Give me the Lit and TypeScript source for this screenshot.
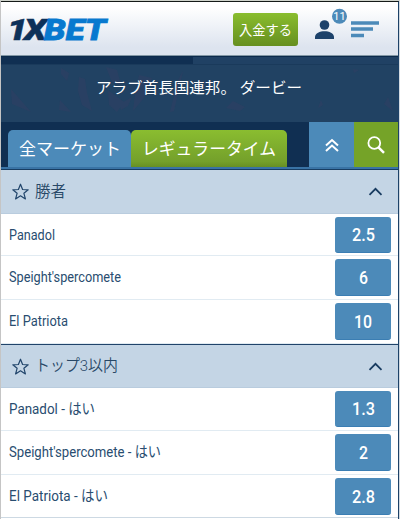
import { LitElement, html, svg, css } from "lit";
import { customElement, property } from "lit/decorators.js";

/** A line of text fitted to a fixed advance width. */
@customElement("fit-text")
class FitText extends LitElement {
  @property() text = "";
  @property({ type: Number }) width = 50;
  @property({ type: Number }) size = 16;
  @property({ type: Number }) weight = 400;
  static styles = css`
    :host { display: block; flex: none; line-height: 0; }
    svg { display: block; overflow: visible; }
    text { fill: currentColor; font-family: Roboto, "Noto Sans CJK JP", sans-serif; }
  `;
  render() {
    return html`<svg width=${this.width} height="20">
      <text x="0" y="16" font-size=${this.size} font-weight=${this.weight}
        textLength=${this.width} lengthAdjust="spacingAndGlyphs">${this.text}</text>
    </svg>`;
  }
}

type Row = { name: string; w: number; odd: string; ow: number; h: number };
type Group = { title: string; tw: number; rows: Row[] };

const groups: Group[] = [
  {
    title: "勝者", tw: 31,
    rows: [
      { name: "Panadol", w: 46, odd: "2.5", ow: 23, h: 42 },
      { name: "Speight'spercomete", w: 112, odd: "6", ow: 9, h: 44 },
      { name: "El Patriota", w: 59, odd: "10", ow: 18, h: 44 },
    ],
  },
  {
    title: "トップ3以内", tw: 83,
    rows: [
      { name: "Panadol - はい", w: 86, odd: "1.3", ow: 23, h: 43 },
      { name: "Speight'spercomete - はい", w: 152, odd: "2", ow: 9, h: 44 },
      { name: "El Patriota - はい", w: 99, odd: "2.8", ow: 23, h: 43 },
    ],
  },
];

const star = svg`<path d="M8.5 1.2 10.6 6.5 16.2 6.8 11.9 10.3 13.4 15.9 8.5 12.8 3.6 15.9 5.1 10.3 .8 6.8 6.4 6.5Z" fill="none" stroke="#21456b" stroke-width="1.2" stroke-linejoin="round"/>`;

@customElement("app-root")
class AppRoot extends LitElement {
  static styles = css`
    :host { display: block; box-sizing: border-box; width: 400px; height: 519px; overflow: hidden;
      background: #fff; border-left: 1px solid #c5c5c5; border-right: 1px solid #d3dae1; border-top: 1px solid #cfd3cb; }
    svg { display: block; flex: none; overflow: visible; }
    .frame { border-right: 1px solid #1d4268; border-top: 1px solid #151a18; height: 518px; box-sizing: border-box; }
    .top { height: 54px; box-sizing: border-box; display: flex; align-items: flex-start; background: linear-gradient(#fff 10%, #dde4ef 85%);
      border-bottom: 1px solid #8297a5; }
    .logo { margin: 14px 0 0 6px; }
    .logo text { font-family: Roboto, sans-serif; font-size: 30px; font-weight: 900; font-style: italic; }
    .one { letter-spacing: -3px; }
    .deposit { margin: 11px 0 0 121px; width: 65px; height: 33px; box-sizing: border-box; border-radius: 3px; padding-top: 6px;
      display: flex; justify-content: center; color: #fff; background: linear-gradient(#89bd2e, #668f20); }
    .user { margin: 4px 0 0 16px; }
    .user text { font-family: Roboto, sans-serif; font-size: 11px; fill: #fff; }
    .menu { margin: 19px 0 0 3px; }
    .strip { height: 9px; box-sizing: border-box; border-top: 1px solid #0b2a4c; border-bottom: 1px solid #1a3a5b;
      background: linear-gradient(90deg, #102f52 192px, #204164 192px); }
    .banner { height: 57px; box-sizing: border-box; padding: 12px 0 0 95px; color: #fff; position: relative; background: #214263; }
    .texture { position: absolute; left: 0; top: 0; }
    .banner fit-text { position: relative; }
    .tabs { height: 45px; display: flex; background: #102f52; }
    .tab { height: 37px; margin-top: 8px; box-sizing: border-box; border-radius: 5px 5px 0 0; padding-top: 8.5px; color: #fff; }
    .all { margin-left: 7px; width: 123px; padding-left: 11px; background: #4c8ab9; }
    .regular { width: 156px; padding-left: 11px; background: linear-gradient(#8abd30, #74a02b 85%, #668f24); }
    .sq { box-sizing: border-box; display: flex; justify-content: center; align-items: center; background: #4c8ab9; width: 45px; margin-left: 22px; }
    .search { background: #75a328; margin-left: 0; flex: 1; padding-right: 1px; }
    .line { height: 3px; box-sizing: border-box; background: #3973a5; border-bottom: 1px solid #183d62; }
    .line + .head { height: 44px; }
    .head { height: 43px; box-sizing: border-box; display: flex; align-items: center; padding: 0 15px 0 11px; color: #284867;
      background: #c4d5e5; border-bottom: 1px solid #b9ccde; }
    .head fit-text { margin: -2px auto 0 6px; }
    .divider { height: 1px; background: #21446a; }
    .row { box-sizing: border-box; display: flex; align-items: flex-start; padding: 3px 7px 0 8px; color: #294d70; border-bottom: 1px solid #e1ebf2; }
    .row:last-child { border-bottom-color: #cdd9e3; }
    .name { margin: 7px auto 0 0; }
    .odd { box-sizing: border-box; width: 56px; height: 36.5px; display: flex; justify-content: center; padding-top: 9px;
      border-radius: 3px; color: #fff; background: #4c8ab9; border-bottom: 1px solid #3b7eb3; }
    .head + .row .odd { height: 36px; padding-top: 8px; }
  `;

  group(g: Group) {
    return html`
      <div class="head">
        <svg width="17" height="17">${star}</svg>
        <fit-text .text=${g.title} .width=${g.tw} .size=${15.5} .weight=${350}></fit-text>
        <svg width="15" height="9"><path d="M1.5 7.8 7.5 1.8 13.5 7.8" fill="none" stroke="#183b60" stroke-width="1.8"/></svg>
      </div>
      ${g.rows.map((r) => html`<div class="row" style="height:${r.h}px">
        <fit-text class="name" .text=${r.name} .width=${r.w} .size=${15}></fit-text>
        <div class="odd"><fit-text .text=${r.odd} .width=${r.ow} .size=${18} .weight=${500}></fit-text></div>
      </div>`)}`;
  }

  render() {
    return html`<div class="frame">
      <div class="top">
        <svg class="logo" width="105" height="25">
          <text class="one" x="0" y="24" fill="#0d3159" stroke="#0d3159" stroke-width=".5" textLength="36" lengthAdjust="spacingAndGlyphs">1X</text>
          <text x="37" y="24" fill="#0879cf" stroke="#0879cf" stroke-width=".8" textLength="62" lengthAdjust="spacingAndGlyphs">BET</text>
        </svg>
        <div class="deposit"><fit-text .text=${"入金する"} .width=${53} .size=${13.5}></fit-text></div>
        <svg class="user" width="34" height="36">
          <circle cx="10.500" cy="19" r="4.800" fill="#1d426b"/>
          <path d="M1 33v-2c0-4 5-5.800 9.500-5.800s9.500 1.800 9.500 5.800v2z" fill="#1d426b"/>
          <circle cx="25.500" cy="10.300" r="7.500" fill="#4c8ab9"/>
          <text x="25.500" y="14.300" text-anchor="middle">11</text>
        </svg>
        <svg class="menu" width="30" height="18">
          <path d="M0 2h28M0 8h22M0 14.500h13" stroke="#4c8ab9" stroke-width="3.500"/>
        </svg>
      </div>
      <div class="strip"></div>
      <div class="banner">
        <svg class="texture" width="397" height="57">
          <path d="M60 3l8 5-2 8-6-7zM78 12l6 2 2 14 5 18-10-6-4-14zM105 2l11 3 4 15-9-3zM107 25l16 12-7 10-8-7zM138 10l13 3-8 20-11 13 2-16zM182 6l-9 40-4 1 8-32zM59 35l11 12-12-2zM10 24l20 23-19-8zM232 36l12 6-5 4-14-3zM119 39l12-7-4 9-7 4zM352 4l6 1-5 3zM320 35l2 5-5 3zM387 32l5 14-9-7z" fill="#493b63" opacity=".22"/>
        </svg>
        <fit-text .text=${"アラブ首長国連邦。 ダービー"} .width=${206} .size=${15}></fit-text>
      </div>
      <div class="tabs">
        <div class="tab all"><fit-text .text=${"全マーケット"} .width=${102} .size=${17}></fit-text></div>
        <div class="tab regular"><fit-text .text=${"レギュラータイム"} .width=${134} .size=${17}></fit-text></div>
        <div class="sq"><svg width="14" height="14"><path d="M1 7.500 7 2l6 5.500M1 13l6-5.500 6 5.500" fill="none" stroke="#fff" stroke-width="2"/></svg></div>
        <div class="sq search"><svg width="18" height="18"><circle cx="7.300" cy="7" r="5.900" fill="none" stroke="#fff" stroke-width="1.800"/><path d="M11.500 11.300 17 16.800" stroke="#fff" stroke-width="2.500"/></svg></div>
      </div>
      <div class="line"></div>
      ${this.group(groups[0])}
      <div class="divider"></div>
      ${this.group(groups[1])}
    </div>`;
  }
}
